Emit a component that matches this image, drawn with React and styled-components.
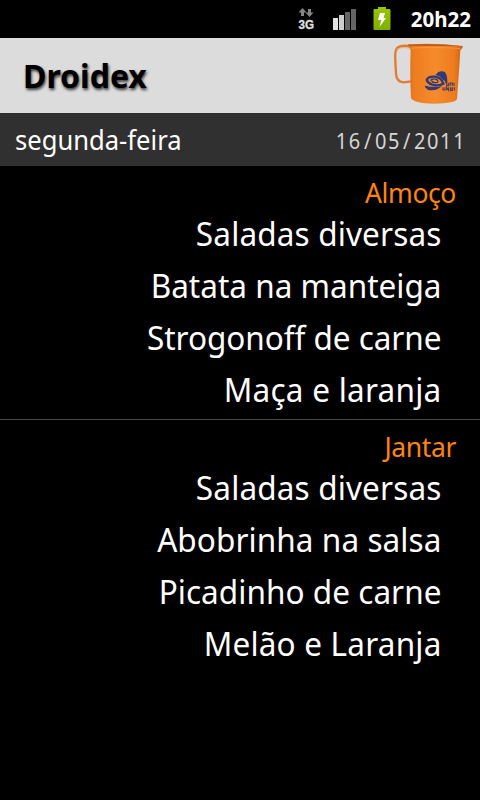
import React from "react";
import styled, { createGlobalStyle } from "styled-components";

const GlobalStyle = createGlobalStyle`
  body {
    margin: 0;
    background: #000;
    font-family: "Noto Sans", "Open Sans", sans-serif;
  }
`;

const Screen = styled.div`
  width: 480px;
  height: 800px;
  overflow: hidden;
  background: #000;
  color: #fff;
`;

const StatusBar = styled.div`
  display: flex;
  justify-content: flex-end;
  height: 38px;
  padding-right: 9px;
`;

const StatusIcon = styled.svg`
  flex: none;
  width: ${(props) => props.$width}px;
  height: 38px;
  margin-right: ${(props) => props.$gap}px;
`;

const StatusTime = styled.div`
  width: 61px;
  font-size: 20.5px;
  font-weight: bold;
  line-height: 38px;
  text-align: right;
  white-space: nowrap;
`;

const Header = styled.header`
  display: flex;
  justify-content: space-between;
  height: 75px;
  padding: 0 13px 0 23px;
  background: #dcdcdc;
`;

const Title = styled.h1`
  margin: 0;
  color: #000;
  font-size: 32px;
  font-weight: bold;
  line-height: 76px;
  text-shadow: 1px 2px 3px rgba(0, 0, 0, 0.75);
`;

const DayBar = styled.div`
  display: flex;
  justify-content: space-between;
  height: 53px;
  padding: 0 14px 0 15px;
  background: #303030;
`;

const DayName = styled.div`
  font-size: 26.5px;
  line-height: 55px;
  transform: scaleX(0.965);
  transform-origin: left;
`;

const DayDate = styled.div`
  color: #d6d6d6;
  font-size: 21.5px;
  line-height: 55px;
  letter-spacing: 1.7px;
  transform: scaleX(0.93);
  transform-origin: right;
`;

const Slash = styled.span`
  padding: 0 2.2px;
`;

const Meal = styled.section`
  padding: 12px 0 3px;
  border-bottom: 1px solid ${(props) => (props.$divider ? "#4a4a4a" : "#000")};
  text-align: right;
`;

const MealName = styled.h2`
  margin: 0;
  padding-right: 24px;
  color: #ff8410;
  font-size: 26.5px;
  font-weight: normal;
  line-height: 30px;
  letter-spacing: -0.4px;
`;

// the glyphs are slightly condensed, anchored to the right edge of the list
const Dish = styled.div`
  height: 52px;
  margin-right: 38.5px;
  font-size: 33px;
  line-height: 52px;
  letter-spacing: ${(props) => props.$spacing}px;
  white-space: nowrap;
  transform: scaleX(0.955);
  transform-origin: right;
`;

const meals = [
  {
    name: "Almoço",
    dishes: [
      { name: "Saladas diversas", spacing: 0.15 },
      { name: "Batata na manteiga", spacing: 0 },
      { name: "Strogonoff de carne", spacing: -0.05 },
      { name: "Maça e laranja", spacing: 0.25 },
    ],
  },
  {
    name: "Jantar",
    dishes: [
      { name: "Saladas diversas", spacing: 0.15 },
      { name: "Abobrinha na salsa", spacing: 0.08 },
      { name: "Picadinho de carne", spacing: 0.04 },
      { name: "Melão e Laranja", spacing: 0.2 },
    ],
  },
];

const NetworkIcon = () => (
  <StatusIcon $width={18} $gap={18} viewBox="0 0 18 38">
    <path d="M5.500 8l4 4.500H7V16H4v-3.500H1.500zM12.500 17l4-4.500H14V9h-3v3.500H8.500z" fill="#858585" />
    <text
      x="1.500"
      y="29"
      fill="#ddd"
      stroke="#ddd"
      strokeWidth="0.4"
      fontFamily="Liberation Sans"
      fontWeight="bold"
      fontSize="13"
      textLength="15.500"
      lengthAdjust="spacingAndGlyphs"
    >
      3G
    </text>
  </StatusIcon>
);

const SignalIcon = () => (
  <StatusIcon $width={23} $gap={17} viewBox="0 0 23 38">
    <path d="M0 18h5v12H0z" fill="#e2e2e2" />
    <path d="M6 15h5v15H6z" fill="#cfcfcf" />
    <path d="M12 12h5v18h-5z" fill="#656565" />
    <path d="M18 9h5v21h-5z" fill="#656565" />
  </StatusIcon>
);

const BatteryIcon = () => (
  <StatusIcon $width={18} $gap={19} viewBox="0 0 18 38">
    <defs>
      <linearGradient id="battery" x2="0" y2="1">
        <stop stopColor="#97c800" />
        <stop offset="1" stopColor="#7fae00" />
      </linearGradient>
    </defs>
    <path d="M5 7h8v2h3.500q1 0 1 1v19q0 1-1 1h-15q-1 0-1-1V10q0-1 1-1H5z" fill="url(#battery)" />
    <path d="M7 13h5l-1.500 5H13L6.500 27l1.700-7H5z" fill="#fff" />
  </StatusIcon>
);

const MugSvg = styled.svg`
  width: 75px;
  height: 75px;
`;

const Mug = () => (
  <MugSvg viewBox="24 6 225 225">
    <defs>
      <linearGradient id="mug">
        <stop stopColor="#d9711d" />
        <stop offset="0.12" stopColor="#ee7d20" />
        <stop offset="0.5" stopColor="#f58b2c" />
        <stop offset="0.85" stopColor="#ed7b1d" />
        <stop offset="1" stopColor="#c95f12" />
      </linearGradient>
    </defs>
    <path
      d="M80 31Q50 26 39 36Q32 43 34 75L36 113Q38 138 58 139L82 136"
      fill="none"
      stroke="#e07c32"
      strokeWidth="7"
    />
    <path d="M39 48Q40 38 54 35L74 36" fill="none" stroke="#f2a35e" strokeWidth="2" />
    <path
      d="M72 25Q150 19 236 30Q238 34 229 43Q226 95 219 189Q214 202 150 203Q88 202 81 186Q77 110 80 43Q72 34 72 25z"
      fill="url(#mug)"
    />
    <path d="M73 26Q150 20 236 31Q152 29 74 30z" fill="#bd5d16" />
    <path d="M79 37Q150 31 230 38" fill="none" stroke="#f6a052" strokeWidth="2" />
    {/* university logo printed on the mug */}
    <g fill="none" stroke="#303a78">
      <path d="M128 132Q133 120 153 122Q173 125 178 143Q164 151 145 146Q132 142 128 132z" strokeWidth="7" />
      <path d="M139 134Q145 126 157 130Q164 134 160 139Q148 142 143 135" strokeWidth="4" />
      <path d="M125 152Q139 161 160 156M160 114Q170 106 181 111Q188 121 187 142" strokeWidth="6" />
    </g>
    <path d="M154 116Q170 102 183 110L189 139Q178 134 168 122z" fill="#303a78" />
    <path d="M121 149Q145 155 174 151Q152 168 131 161z" fill="#303a78" />
    <path
      d="M188 140v9h6v-9M199 149v-8h6v8M210 149v-9M177 154v8h6v-8M188 163v-9l6 9v-9M200 154v9h5v-9M211 154v9"
      fill="none"
      stroke="#4b3f66"
      strokeWidth="3.500"
    />
  </MugSvg>
);

const App = () => {
  return (
    <Screen>
      <GlobalStyle />
      <StatusBar>
        <NetworkIcon />
        <SignalIcon />
        <BatteryIcon />
        <StatusTime>20h22</StatusTime>
      </StatusBar>
      <Header>
        <Title>Droidex</Title>
        <Mug />
      </Header>
      <DayBar>
        <DayName>segunda-feira</DayName>
        <DayDate>
          16<Slash>/</Slash>05<Slash>/</Slash>2011
        </DayDate>
      </DayBar>
      {meals.map((meal, index) => (
        <Meal key={meal.name} $divider={index < meals.length - 1}>
          <MealName>{meal.name}</MealName>
          {meal.dishes.map((dish) => (
            <Dish key={dish.name} $spacing={dish.spacing}>
              {dish.name}
            </Dish>
          ))}
        </Meal>
      ))}
    </Screen>
  );
};

export default App;
